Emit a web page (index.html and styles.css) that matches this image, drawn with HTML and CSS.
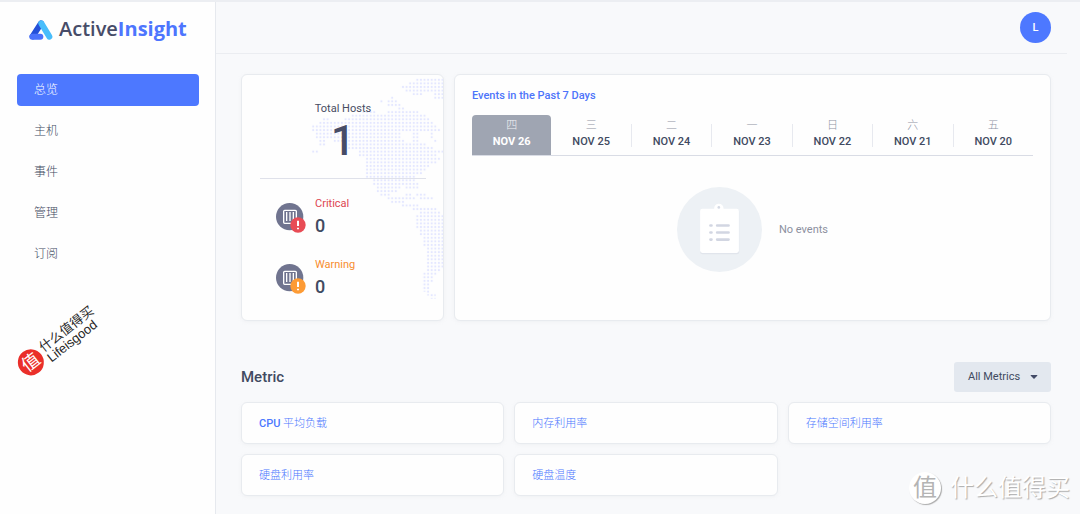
FILE: index.html
```html
<!DOCTYPE html>
<html lang="zh-CN">
<head>
<meta charset="utf-8">
<meta name="viewport" content="width=device-width, initial-scale=1">
<title>ActiveInsight</title>
<link rel="stylesheet" href="styles.css">
</head>
<body>
<div class="app">
  <aside class="sidebar">
    <a class="brand" href="#">
      <svg class="brand-mark" viewBox="0 0 72 60" aria-hidden="true">
        <path d="M36 10 11 49" stroke="#2450d8" stroke-width="18" stroke-linecap="round"/>
        <path d="M37 10 61 50" stroke="#48bdfb" stroke-width="18" stroke-linecap="round"/>
        <rect x="1" y="41" width="42" height="18" rx="9" fill="#4a72fb"/>
      </svg>
      <span class="brand-name">Active<b>Insight</b></span>
    </a>
    <nav class="nav">
      <a class="nav-item active" href="#">总览</a>
      <a class="nav-item" href="#">主机</a>
      <a class="nav-item" href="#">事件</a>
      <a class="nav-item" href="#">管理</a>
      <a class="nav-item" href="#">订阅</a>
    </nav>
    <div class="stamp">
      <span class="stamp-seal">值</span>
      <span class="stamp-text">什么值得买<br>Lifeisgood</span>
    </div>
  </aside>
  <div class="page">
    <header class="topbar"><button class="avatar" type="button">L</button></header>
    <main class="content">
      <div class="overview">
        <section class="card hosts">
          <svg class="map" viewBox="36 44 604 737" preserveAspectRatio="xMaxYMin meet" aria-hidden="true">
            <defs><pattern id="dots" x="525" y="53" width="10.8" height="10.8" patternUnits="userSpaceOnUse"><circle cx="5.4" cy="5.4" r="3.3" fill="#e4e7ff"/></pattern></defs>
            <g fill="url(#dots)">
              <path d="M557 53H640V117H612V96H580V106H546V96H525V85H513V74H535V64H557Z"/>
              <path d="M449 118H460V129H449ZM471 118H482V107H493V118H503V129H514V140H525V150H567V161H590V172H601V182H612V193H623V204H634V215H612V236H623V247H612V236H601V215H568V247H590V258H612V269H640V280H623V291H634V301H623V312H601V323H590V334H579V345H557V366H568V388H525V377H514V388H503V399H482V410H525V399H546V410H557V420H525V431H482V420H471V410H449V399H438V377H428V355H407V291H385V269H353V247H310V236H288V258H266V280H245V269H266V236H256V215H245V193H266V182H277V172H299V182H342V172H364V161H396V150H439V161H471V150H503V140H471Z"/>
              <path d="M557 399H590V410H612V420H568V410H557ZM514 431H568V442H623V453H634V464H640V626H634V637H623V647H612V669H601V701H618V717H601V707H590V696H577V637H590V561H579V529H568V507H557V464H568V453H546V442H514Z"/>
            </g>
            <path fill="#fefefe" d="M514 215H546V236H514ZM525 236H546V247H525Z"/>
          </svg>
          <div class="host-total">
            <span class="host-label">Total Hosts</span>
            <strong class="host-count">1</strong>
          </div>
          <div class="host-row critical">
            <svg class="host-icon" viewBox="0 0 90 90" aria-hidden="true">
              <circle cx="41" cy="41" r="41" fill="#70748f"/>
              <rect x="23" y="22" width="38" height="39" rx="3" fill="none" stroke="#fff" stroke-width="4"/>
              <path d="M32 27V54M42 27V54M52 27V54" stroke="#fff" stroke-width="4"/>
              <circle cx="66" cy="66" r="23" fill="#e84c55"/>
              <path d="M66 53V69M66 74V79" stroke="#fff" stroke-width="6"/>
            </svg>
            <div class="host-info"><span class="host-status">Critical</span><strong>0</strong></div>
          </div>
          <div class="host-row warning">
            <svg class="host-icon" viewBox="0 0 90 90" aria-hidden="true">
              <circle cx="41" cy="41" r="41" fill="#70748f"/>
              <rect x="23" y="22" width="38" height="39" rx="3" fill="none" stroke="#fff" stroke-width="4"/>
              <path d="M32 27V54M42 27V54M52 27V54" stroke="#fff" stroke-width="4"/>
              <circle cx="66" cy="66" r="23" fill="#fd9b35"/>
              <path d="M66 53V69M66 74V79" stroke="#fff" stroke-width="6"/>
            </svg>
            <div class="host-info"><span class="host-status">Warning</span><strong>0</strong></div>
          </div>
        </section>
        <section class="card events">
          <h2 class="events-title">Events in the Past 7 Days</h2>
          <div class="days">
            <button class="day selected" type="button"><span>四</span><b>NOV 26</b></button>
            <button class="day" type="button"><span>三</span><b>NOV 25</b></button>
            <button class="day" type="button"><span>二</span><b>NOV 24</b></button>
            <button class="day" type="button"><span>一</span><b>NOV 23</b></button>
            <button class="day" type="button"><span>日</span><b>NOV 22</b></button>
            <button class="day" type="button"><span>六</span><b>NOV 21</b></button>
            <button class="day" type="button"><span>五</span><b>NOV 20</b></button>
          </div>
          <div class="empty">
            <svg class="empty-icon" viewBox="0 0 254 254" aria-hidden="true">
              <circle cx="127" cy="127" r="127" fill="#edf1f5"/>
              <rect x="69" y="68" width="117" height="133" rx="7" fill="#e1e5ec"/>
              <circle cx="125" cy="64" r="14" fill="#fff"/>
              <rect x="69" y="65" width="116" height="132" rx="7" fill="#fff"/>
              <circle cx="125" cy="61" r="4" fill="#d5dae4"/>
              <path d="M100 115H103M120 115H154M100 136H103M120 136H154M100 157H103M120 157H154" stroke="#d2d6e2" stroke-width="8" stroke-linecap="round"/>
            </svg>
            <span>No events</span>
          </div>
        </section>
      </div>
      <div class="metric-head">
        <h2 class="metric-title">Metric</h2>
        <button class="filter" type="button">All Metrics
          <svg class="caret" viewBox="0 0 8 5" aria-hidden="true"><path d="M1 0H7Q8 0 7 1L4 4 1 1Q0 0 1 0Z" fill="#424a66"/></svg>
        </button>
      </div>
      <div class="metrics">
        <a class="card metric" href="#"><b>CPU</b> 平均负载</a>
        <a class="card metric" href="#">内存利用率</a>
        <a class="card metric" href="#">存储空间利用率</a>
        <a class="card metric" href="#">硬盘利用率</a>
        <a class="card metric" href="#">硬盘温度</a>
      </div>
    </main>
  </div>
  <div class="watermark"><span class="watermark-seal">值</span><span>什么值得买</span></div>
</div>
</body>
</html>
```
FILE: styles.css
```css
* { box-sizing: border-box; }
body {
  margin: 0;
  background: #f8f9fb;
  color: #414a61;
  font: 11px/16px Roboto, "Noto Sans CJK SC", sans-serif;
}
a { color: inherit; text-decoration: none; }
button { font: inherit; color: inherit; border: 0; padding: 0; background: none; }
h2 { margin: 0; }

.app {
  position: relative;
  display: flex;
  min-height: 100vh;
  border-top: 2px solid #eceef2;
  overflow: hidden;
}

.sidebar {
  flex: 0 0 216px;
  padding: 15px 16px 0 17px;
  background: #fefefe;
  border-right: 1px solid #e6e9ee;
}
.brand { display: flex; align-items: center; gap: 6px; height: 24px; margin-left: 12px; }
.brand-mark { width: 24px; height: 20px; margin-top: 2px; }
.brand-name { font: 600 20px/24px "Open Sans", sans-serif; color: #474c68; }
.brand-name b { font-weight: 700; color: #4d75fe; }

.nav { display: flex; flex-direction: column; gap: 9px; margin-top: 33px; }
.nav-item {
  height: 32px;
  padding-left: 17px;
  border-radius: 4px;
  font-size: 12px;
  line-height: 32px;
  font-weight: 300;
}
.nav-item.active { background: #4d78ff; color: #fff; }

.stamp {
  position: absolute;
  left: 16px;
  top: 345px;
  display: flex;
  align-items: center;
  gap: 3px;
  transform: rotate(-38deg);
  transform-origin: 13px 13px;
}
.stamp-seal {
  width: 26px;
  height: 26px;
  border-radius: 50%;
  background: #ea2f2a;
  color: #fff;
  font-size: 18px;
  line-height: 25px;
  text-align: center;
}
.stamp-text {
  padding-top: 5px;
  font: 13px/13px "Liberation Sans", "Noto Sans CJK SC", sans-serif;
  color: #262626;
  white-space: nowrap;
}

.page { flex: 1; min-width: 0; }
.topbar {
  display: flex;
  justify-content: flex-end;
  align-items: center;
  height: 52px;
  margin-right: 13px;
  padding-right: 16px;
  border-bottom: 1px solid #ebedf1;
}
.avatar { width: 31px; height: 31px; border-radius: 50%; background: #4d78ff; color: #fff; font-weight: 500; }

.content { padding: 20px 29px 18px 25px; }
.card {
  background: #fefefe;
  border: 1px solid #e8ebef;
  border-radius: 6px;
  box-shadow: 0 1px 3px #e9ebf080;
}
.overview { display: flex; gap: 10px; }
.hosts { position: relative; flex: 0 0 203px; padding: 26px 17px 19px 18px; overflow: hidden; }
.map { position: absolute; inset: 0; width: 100%; height: 100%; }
.host-total {
  position: relative;
  display: flex;
  flex-direction: column;
  align-items: center;
  height: 78px;
  border-bottom: 1px solid #dfe1ea;
}
.host-label { color: #474c62; }
.host-count { font-size: 42px; line-height: 48px; font-weight: 500; color: #474c66; }
.host-row { position: relative; display: flex; gap: 9px; height: 44px; margin: 17px 0 0 16px; }
.host-icon { width: 30px; height: 30px; margin-top: 7px; }
.host-info { display: flex; flex-direction: column; }
.host-info strong { font-size: 18px; line-height: 28px; font-weight: 500; }
.critical .host-status { color: #dd4550; }
.warning .host-status { color: #f78d2f; }

.events { flex: 1; min-width: 0; padding: 13px 17px 48px; }
.events-title { font-size: 11px; line-height: 16px; font-weight: 500; color: #4d74fa; }
.days { display: flex; margin-top: 11px; border-bottom: 1px solid #d9dce5; }
.day { flex: 1; height: 40px; display: flex; flex-direction: column; align-items: center; padding-top: 3px; }
.day span { font-weight: 300; color: #8e93a5; }
.day b { font-weight: 500; }
.day + .day + .day { border-left: 1px solid; border-image: linear-gradient(transparent 25%, #e7e9ef 25% 78%, transparent 78%) 1; }
.day.selected { background: #9fa5b2; color: #fff; border-radius: 4px 4px 0 0; }
.day.selected span { color: #f0f1f4; }
.day.selected b { font-weight: 700; }
.empty { display: flex; align-items: center; justify-content: center; gap: 17px; margin-top: 31px; color: #8c909f; }
.empty-icon { width: 85px; height: 85px; }

.metric-head { display: flex; align-items: center; justify-content: space-between; margin: 41px 0 10px; }
.metric-title { font-size: 15px; line-height: 20px; font-weight: 500; }
.filter {
  display: flex;
  align-items: center;
  justify-content: space-between;
  width: 97px;
  height: 30px;
  padding: 0 13px 0 14px;
  border-radius: 3px;
  background: #e3e8ef;
}
.caret { width: 8px; height: 5px; }
.metrics { display: grid; grid-template-columns: repeat(3, 1fr); gap: 10px; }
.metric { height: 42px; padding: 0 17px; line-height: 42px; font-weight: 300; color: #4d78ff; }
.metric b { font-weight: 500; }

.watermark {
  position: absolute;
  right: 10px;
  bottom: 10px;
  display: flex;
  align-items: center;
  gap: 9px;
  font-size: 24px;
  line-height: 32px;
  color: #fff;
  text-shadow: 1px 1px 1px #aaa;
}
.watermark-seal {
  width: 32px;
  height: 32px;
  border-radius: 50%;
  background: #fff;
  box-shadow: 1px 1px 1px #aaa;
  color: #b4b4b4;
  text-align: center;
  text-shadow: none;
}
```
